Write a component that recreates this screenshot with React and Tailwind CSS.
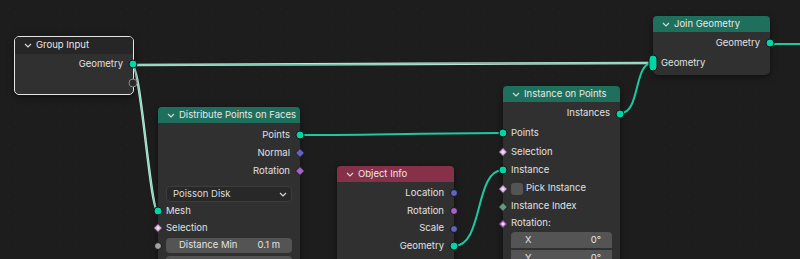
import React from "react";

const GREEN = "bg-[#00d6a3]";

function Chevron({ className = "" }) {
  return (
    <svg width="8" height="5" viewBox="0 0 8 5" className={className}>
      <path d="M1 1 L4 4 L7 1" fill="none" stroke="#d8d8d8" strokeWidth="1.2" />
    </svg>
  );
}

function Dot({ color = GREEN, size = "w-[9px] h-[9px]" }) {
  return <span className={`block rounded-full border border-[#141414] ${size} ${color}`} />;
}

function Diamond({ color, dot = false, hollow = false }) {
  return (
    <svg width="10" height="10" viewBox="0 0 10 10" className="block">
      <path d="M5 0.6 L9.4 5 L5 9.4 L0.6 5 Z" fill={color} stroke="#141414" strokeWidth="0.8" />
      {dot && <rect x="3.6" y="3.6" width="2.8" height="2.8" transform="rotate(45 5 5)" fill="#e9e1ec" />}
      {hollow && <path d="M5 3 L7 5 L5 7 L3 5 Z" fill="#e9e1ec" />}
    </svg>
  );
}

function Socket({ side, children }) {
  const pos =
    side === "in"
      ? "left-0 -translate-x-1/2"
      : "right-0 translate-x-1/2";
  return (
    <span className={`absolute top-1/2 -translate-y-1/2 ${pos} flex items-center justify-center`}>
      {children}
    </span>
  );
}

function OutRow({ label, h = "h-[18px]", socket }) {
  return (
    <div className={`relative flex items-center justify-end pr-[10px] ${h}`}>
      <span>{label}</span>
      {socket && <Socket side="out">{socket}</Socket>}
    </div>
  );
}

function InRow({ label, h = "h-[18px]", socket, children }) {
  return (
    <div className={`relative flex items-center pl-[8px] ${h}`}>
      {children}
      <span>{label}</span>
      {socket && <Socket side="in">{socket}</Socket>}
    </div>
  );
}

function Header({ title, color, h = "h-[16px]" }) {
  return (
    <div className={`flex items-center gap-[4px] pl-[9px] rounded-t-[4px] text-[#e8e8e8] ${h} ${color}`}>
      <Chevron />
      <span>{title}</span>
    </div>
  );
}

function Field({ label, value, className = "" }) {
  return (
    <div className={`mx-2 flex items-center justify-between bg-[#545454] text-[#e2e2e2] ${className}`}>
      <span>{label}</span>
      <span>{value}</span>
    </div>
  );
}

function Links() {
  return (
    <svg width="800" height="259" className="absolute inset-0">
      {/* links of the selected Group Input node */}
      <g fill="none" strokeLinecap="round">
        <path d="M132 65 C 300 65, 480 63, 650 63" stroke="#c4ebe0" strokeWidth="2.6" />
        <path d="M132 65 C 300 65, 480 63, 650 63" stroke="#58b99e" strokeWidth="0.8" />
        <path d="M132 65 C 141 65, 150 212, 158 212" stroke="#c4ebe0" strokeWidth="2.4" />
        <path d="M132 65 C 141 65, 150 212, 158 212" stroke="#72cfb5" strokeWidth="0.8" />
      </g>
      <g fill="none" stroke="#1fc9a0" strokeWidth="2" strokeLinecap="round">
        <path d="M300 135 C 380 135, 430 133, 503 133" />
        <path d="M454 246 C 484 246, 474 170, 503 170" />
        <path d="M621 113 C 640 113, 634 63, 652 63" />
        <path d="M769 44 L 800 44" />
      </g>
    </svg>
  );
}

export default function App() {
  return (
    <div
      className="relative w-[800px] h-[259px] overflow-hidden bg-[#1d1d1d] bg-[radial-gradient(circle,#262626_0.8px,transparent_1px)] bg-[length:17px_17px] text-[9.5px] text-[#e0e0e0]"
      style={{ fontFamily: "Inter, 'Noto Sans', sans-serif" }}
    >
      <Links />

      {/* Group Input */}
      <div className="absolute left-[14px] top-[36px] w-[120px] rounded-[5px] border border-[#e4e4e4] bg-[#303030] pb-[2px] shadow-[0_2px_6px_rgba(0,0,0,0.5)]">
        <Header title="Group Input" color="bg-[#262626]" h="h-[17px]" />
        <div className="pt-[1px]">
          <OutRow label="Geometry" socket={<Dot />} />
          <OutRow
            label=""
            h="h-[19px]"
            socket={<span className="block w-[9px] h-[9px] rounded-full border border-[#8a8a8a] bg-[#2a2a2a]" />}
          />
        </div>
      </div>

      {/* Distribute Points on Faces */}
      <div className="absolute left-[158px] top-[107px] w-[142px] h-[170px] rounded-[5px] bg-[#303030] shadow-[0_2px_6px_rgba(0,0,0,0.5)]">
        <Header title="Distribute Points on Faces" color="bg-[#1e6f5c]" />
        <div className="pt-[3px]">
          <OutRow label="Points" socket={<Dot />} />
          <OutRow label="Normal" socket={<Diamond color="#6363c7" />} />
          <OutRow label="Rotation" socket={<Diamond color="#a563c7" />} />
          <div className="mx-2 mt-[6px] h-[16px] flex items-center justify-between pl-[6px] pr-[4px] rounded-[4px] border border-[#3d3d3d] bg-[#282828] text-[#dedede]">
            <span>Poisson Disk</span>
            <Chevron />
          </div>
          <InRow label="Mesh" socket={<Dot />} h="h-[18px]" />
          <InRow label="Selection" socket={<Diamond color="#cca6d6" hollow />} h="h-[16px]" />
          <div className="relative mt-[2px]">
            <Field label="Distance Min" value="0.1 m" className="h-[15px] rounded-[4px] pl-[13px] pr-[12px]" />
            <Socket side="in">
              <Dot color="bg-[#a1a1a1]" size="w-[8px] h-[8px]" />
            </Socket>
          </div>
          <Field className="mt-[3px] h-[15px] rounded-[4px]" />
        </div>
      </div>

      {/* Object Info */}
      <div className="absolute left-[337px] top-[166px] w-[117px] h-[110px] rounded-[5px] bg-[#303030] shadow-[0_2px_6px_rgba(0,0,0,0.5)]">
        <Header title="Object Info" color="bg-[#86304a]" />
        <div className="pt-[2px]">
          <OutRow label="Location" socket={<Dot color="bg-[#6363c7]" size="w-[8px] h-[8px]" />} />
          <OutRow label="Rotation" socket={<Dot color="bg-[#a563c7]" size="w-[8px] h-[8px]" />} />
          <OutRow label="Scale" h="h-[17px]" socket={<Dot color="bg-[#6363c7]" size="w-[8px] h-[8px]" />} />
          <OutRow label="Geometry" socket={<Dot />} />
        </div>
      </div>

      {/* Instance on Points */}
      <div className="absolute left-[503px] top-[86px] w-[117px] h-[190px] rounded-[5px] bg-[#303030] shadow-[0_2px_6px_rgba(0,0,0,0.5)]">
        <Header title="Instance on Points" color="bg-[#1e6f5c]" />
        <div className="pt-[2px]">
          <OutRow label="Instances" h="h-[19px]" socket={<Dot />} />
          <InRow label="Points" h="h-[20px]" socket={<Dot />} />
          <InRow label="Selection" socket={<Diamond color="#cca6d6" hollow />} />
          <InRow label="Instance" socket={<Dot />} />
          <InRow label="Pick Instance" h="h-[19px]" socket={<Diamond color="#cca6d6" hollow />}>
            <span className="mr-[3px] block w-[12px] h-[12px] rounded-[3px] bg-[#545454]" />
          </InRow>
          <InRow label="Instance Index" h="h-[17px]" socket={<Diamond color="#5f9a7f" />} />
          <InRow label="Rotation:" h="h-[17px]" socket={<Diamond color="#a563c7" dot />} />
          <Field label="X" value="0°" className="h-[16px] rounded-t-[4px] pl-[14px] pr-[11px]" />
          <Field label="Y" value="0°" className="mt-[2px] h-[16px] pl-[14px] pr-[11px]" />
        </div>
      </div>

      {/* Join Geometry */}
      <div className="absolute left-[653px] top-[16px] w-[117px] rounded-[5px] bg-[#303030] pb-[2px] shadow-[0_2px_6px_rgba(0,0,0,0.5)]">
        <Header title="Join Geometry" color="bg-[#1e6f5c]" />
        <div className="pt-[2px]">
          <OutRow label="Geometry" socket={<Dot />} />
          <div className="mt-[1px]">
            <InRow
              label="Geometry"
              h="h-[20px]"
              socket={<span className="block w-[9px] h-[17px] rounded-full border border-[#141414] bg-[#00d6a3]" />}
            />
          </div>
        </div>
      </div>
    </div>
  );
}
